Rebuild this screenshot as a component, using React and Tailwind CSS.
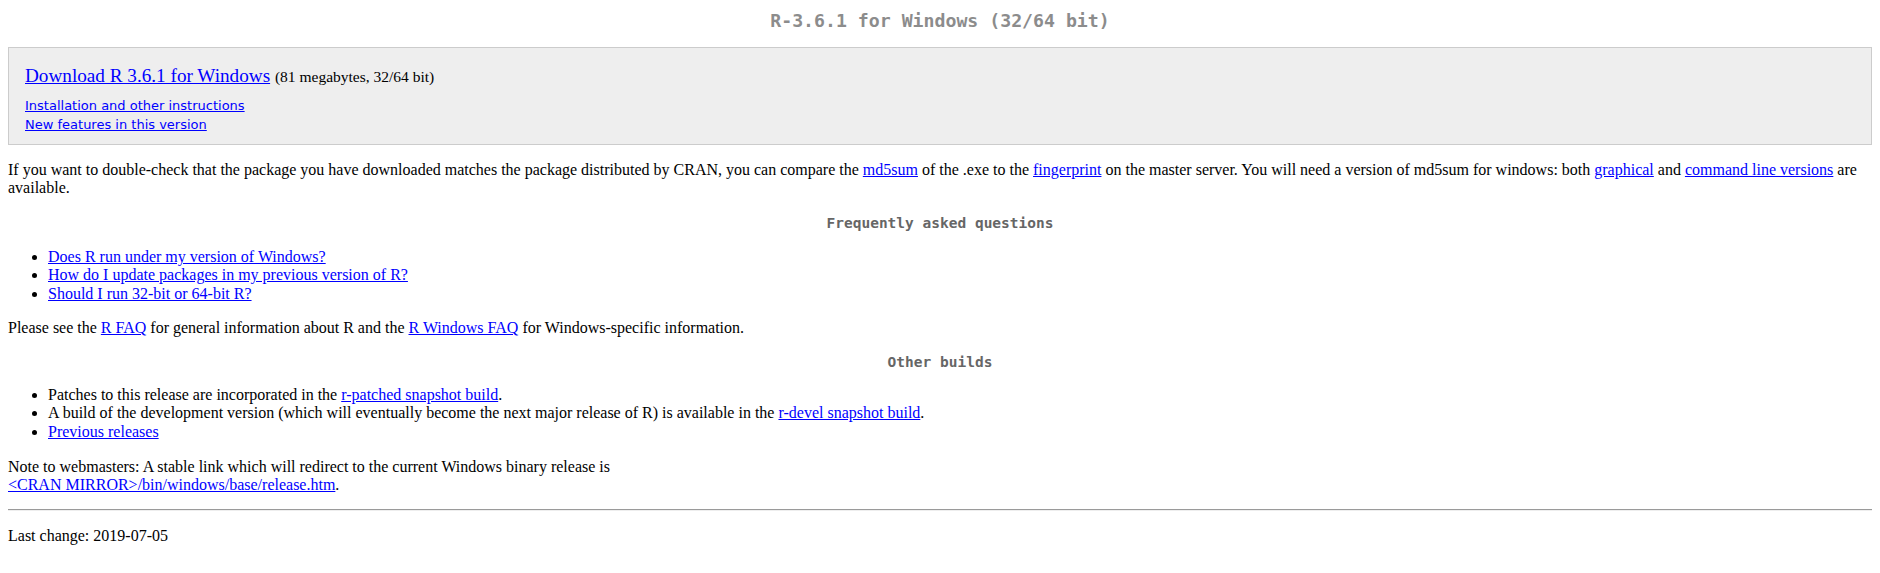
export default function App() {
  const serif = "font-['Liberation_Serif','Times_New_Roman',serif]";
  const mono = "font-['DejaVu_Sans_Mono','Liberation_Mono',monospace]";
  const A = ({ children }) => (
    <a href="#" className="text-[#0000ff] underline">
      {children}
    </a>
  );
  return (
    <div className={`${serif} bg-white text-black text-[16px] px-2 min-h-[573px]`}>
      <h1 className={`${mono} pt-[10px] text-center font-bold text-[18.2px] leading-[22px] text-[#8c8c8c]`}>
        R-3.6.1 for Windows (32/64 bit)
      </h1>

      <div className="mt-[15px] border border-[#cccccc] bg-[#eeeeee] px-4 pt-[17px] pb-[10px]">
        <p className="text-[19.2px] leading-[21px]">
          <A>Download R 3.6.1 for Windows</A> <span className="text-[15.5px]">(81 megabytes, 32/64 bit)</span>
        </p>
        <p className="mt-[9px] font-['DejaVu_Sans','Verdana',sans-serif] text-[13px] leading-[19px]">
          <A>Installation and other instructions</A>
          <br />
          <A>New features in this version</A>
        </p>
      </div>

      <p className="mt-4 leading-[18px]">
        If you want to double-check that the package you have downloaded matches the package distributed by CRAN, you can compare the{" "}
        <A>md5sum</A> of the .exe to the <A>fingerprint</A> on the master server. You will need a version of md5sum for windows: both{" "}
        <A>graphical</A> and <A>command line versions</A> are available.
      </p>

      <h2 className={`${mono} mt-[18px] text-center font-bold text-[14.5px] leading-[17px] text-[#666666]`}>
        Frequently asked questions
      </h2>

      <ul className="mt-4 list-disc pl-10 leading-[18.4px]">
        <li>
          <A>Does R run under my version of Windows?</A>
        </li>
        <li>
          <A>How do I update packages in my previous version of R?</A>
        </li>
        <li>
          <A>Should I run 32-bit or 64-bit R?</A>
        </li>
      </ul>

      <p className="mt-4 leading-[18px]">
        Please see the <A>R FAQ</A> for general information about R and the <A>R Windows FAQ</A> for Windows-specific information.
      </p>

      <h2 className={`${mono} mt-[17px] text-center font-bold text-[14.5px] leading-[17px] text-[#666666]`}>
        Other builds
      </h2>

      <ul className="mt-[15px] list-disc pl-10 leading-[18.2px]">
        <li>
          Patches to this release are incorporated in the <A>r-patched snapshot build</A>.
        </li>
        <li>
          A build of the development version (which will eventually become the next major release of R) is available in the{" "}
          <A>r-devel snapshot build</A>.
        </li>
        <li>
          <A>Previous releases</A>
        </li>
      </ul>

      <p className="mt-[17px] leading-[18px]">
        Note to webmasters: A stable link which will redirect to the current Windows binary release is
        <br />
        <A>&lt;CRAN MIRROR&gt;/bin/windows/base/release.htm</A>.
      </p>

      <hr className="mt-[15px] h-[2px] border-0 border-t border-b border-t-[#9a9a9a] border-b-[#eeeeee]" />

      <p className="mt-[16px] leading-[18px]">Last change: 2019-07-05</p>
    </div>
  );
}
